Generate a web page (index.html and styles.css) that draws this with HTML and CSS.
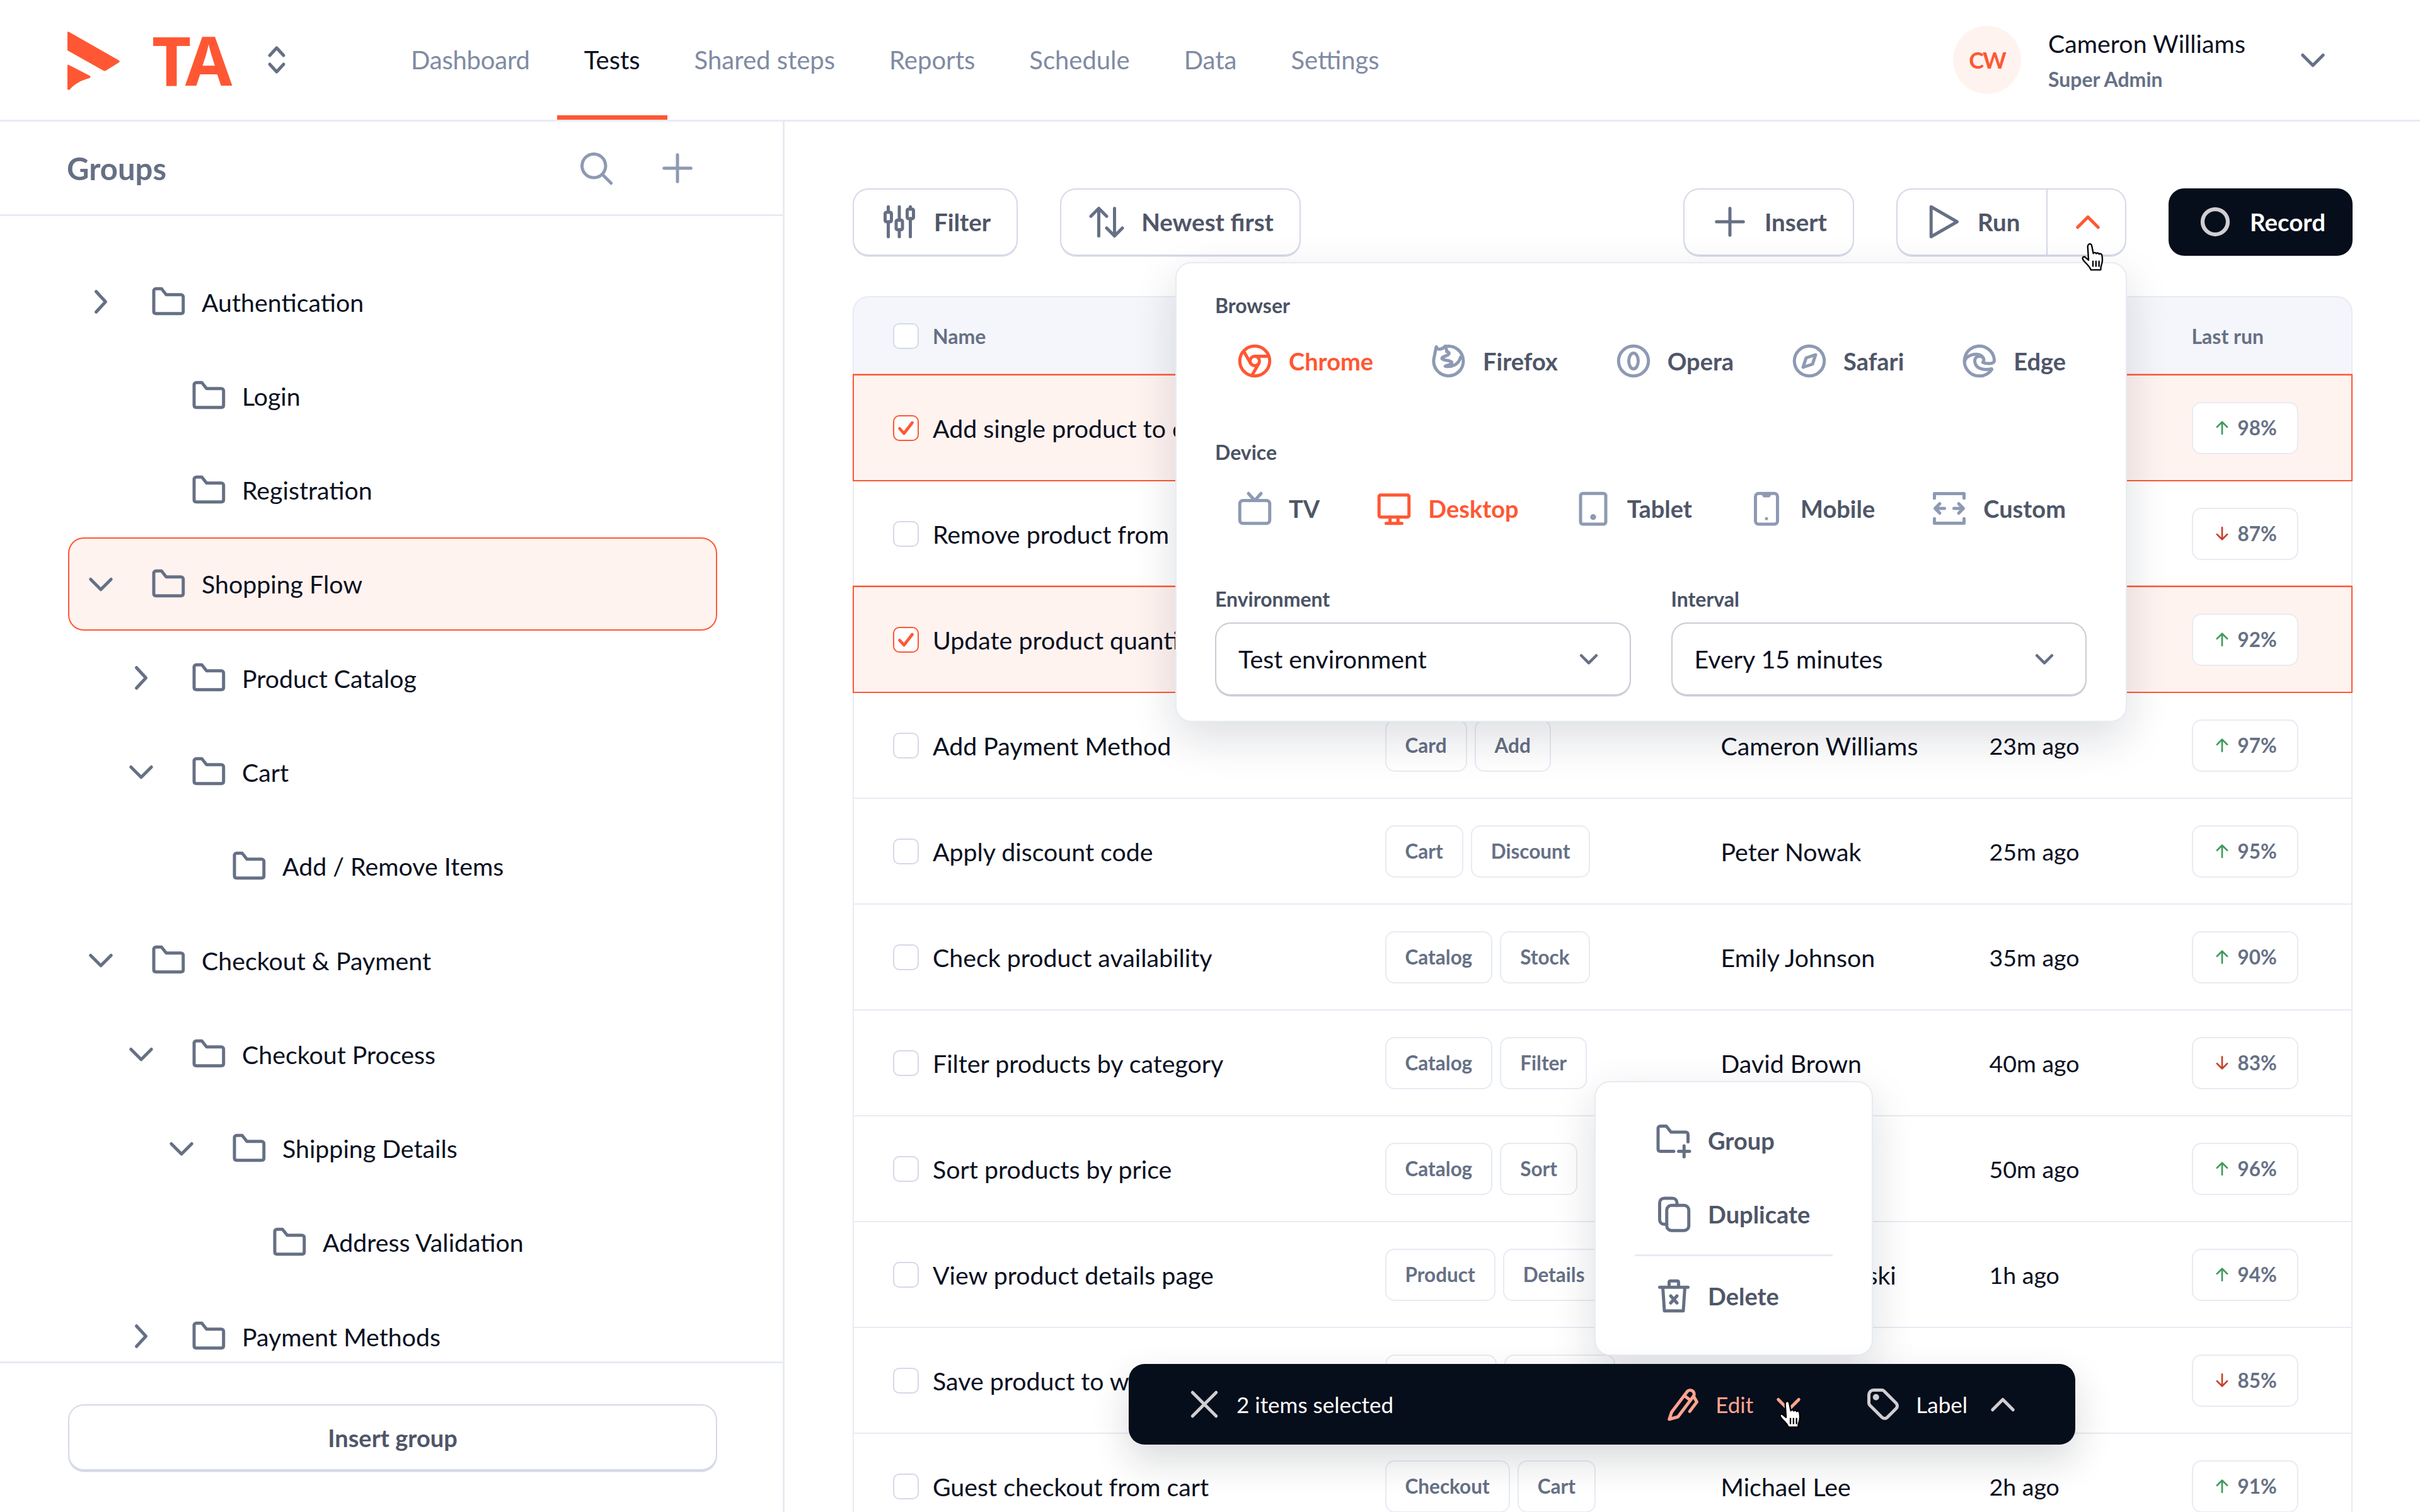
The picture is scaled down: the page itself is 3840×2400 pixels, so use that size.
FILE: index.html
```html
<!DOCTYPE html>
<html lang="en">
<head>
  <meta charset="UTF-8">
  <title>Tests</title>
  <meta name="viewport" content="width=device-width, initial-scale=1.0">
  <link rel="stylesheet" href="styles.css">
</head>
<body>
  <!-- icon sprite -->
  <svg class="sprite" xmlns="http://www.w3.org/2000/svg">
    <symbol id="i-folder" viewBox="0 0 24 24"><path d="M2.4 5.2c0-.9.6-1.5 1.5-1.5h3.4l3 3.8h9.3c.9 0 1.5.6 1.5 1.5v9c0 1-.6 1.5-1.5 1.5H3.9c-.9 0-1.5-.5-1.5-1.5z"/></symbol>
    <symbol id="i-right" viewBox="0 0 24 24"><path d="M9 5.5l6 6.5-6 6.5"/></symbol>
    <symbol id="i-down" viewBox="0 0 24 24"><path d="M5.5 9l6.5 6.5L18.500 9"/></symbol>
    <symbol id="i-up" viewBox="0 0 24 24"><path d="M5.5 15.5L12 9l6.5 6.5"/></symbol>
    <symbol id="i-search" viewBox="0 0 24 24"><circle cx="10.5" cy="10.5" r="7.5"/><path d="M16 16l5.5 5.5"/></symbol>
    <symbol id="i-plus" viewBox="0 0 24 24"><path d="M12 3.5v17M3.5 12h17"/></symbol>
    <symbol id="i-filter" viewBox="0 0 24 24"><path d="M5 2.5v3M5 12v9.5M12 2.5v8M12 17v4.5M19 2.5v1M19 10v11.5"/><rect x="3" y="6" width="4" height="6" rx=".8"/><rect x="10" y="11" width="4" height="6" rx=".8"/><rect x="17" y="4" width="4" height="6" rx=".8"/></symbol>
    <symbol id="i-sort" viewBox="0 0 24 24"><path d="M7 21V3.5M2 8.5l5-5 5 5M17 3.5V21M12 16l5 5 5-5"/></symbol>
    <symbol id="i-play" viewBox="0 0 24 24"><path d="M4.5 2.5L21 12 4.5 21.5z"/></symbol>
    <symbol id="i-circle" viewBox="0 0 24 24"><circle cx="12" cy="12" r="8"/></symbol>
    <symbol id="i-chrome" viewBox="0 0 24 24"><circle cx="12" cy="12" r="9.5"/><circle cx="12" cy="12" r="3"/><path d="M12 9h8.9M14.6 13.5l-4.4 7.7M9.4 13.5L5 5.8"/></symbol>
    <symbol id="i-firefox" viewBox="0 0 24 24"><path d="M10.5 2.7A9.4 9.4 0 1 1 2.5 10.5L4 3c.6 1.500 1.500 1.600 2.800 1.400 1-.2 2-.8 2.900-1.800.3 1.400 1.300 2.400.9 3.400 2.400.5 1.900 2-.6 2.800-3.500 1.200-3 2.200 0 2.700 4 .5 5 1.500 2.500 2.800-1 .5-2.500.7-2.800 1 3.300.7 8.300-.3 9.800-5.800"/></symbol>
    <symbol id="i-opera" viewBox="0 0 24 24"><circle cx="12" cy="12" r="9.5"/><ellipse cx="12" cy="12" rx="3" ry="5"/></symbol>
    <symbol id="i-safari" viewBox="0 0 24 24"><circle cx="12" cy="12" r="9.5"/><path d="M8 16l2-6 6-2-2 6z"/></symbol>
    <symbol id="i-edge" viewBox="0 0 24 24"><path d="M21.4 11.4a9.5 9.5 0 1 0-1.700 6.100"/><path d="M21.4 11.4c.2 3-5.400 2.400-7.300 1.500 1.400-1.600.4-4-2.300-3.900-1.700.1-2.900 1.200-2.800 3.200.3 4 4.500 6.200 10.700 4.800"/><path d="M2.6 12.600C2.300 8.500 11.700 5.400 14.300 9.900"/></symbol>
    <symbol id="i-tv" viewBox="0 0 24 24"><rect x="2.5" y="7" width="19" height="14.5" rx="2"/><path d="M16 2.5L12 7 8 2.5"/></symbol>
    <symbol id="i-desktop" viewBox="0 0 24 24"><rect x="2.5" y="3.5" width="19" height="14" rx="1"/><path d="M7 21.500h10M9.500 17.500v4M14.500 17.500v4"/></symbol>
    <symbol id="i-tablet" viewBox="0 0 24 24"><rect x="4" y="2.5" width="16" height="19.5" rx="1.5"/><circle cx="12" cy="17.5" r=".9"/></symbol>
    <symbol id="i-mobile" viewBox="0 0 24 24"><rect x="5" y="2.5" width="14" height="19.5" rx="2"/><path d="M10 3l.5 1h3l.5-1M12 18.500h.01"/></symbol>
    <symbol id="i-custom" viewBox="0 0 24 24"><path d="M2.600 5.500V2.600h18.800v2.900M2.600 18.500v2.900h18.800v-2.900M9 12H3.500M6 9l-3 3 3 3M15 12h5.500M18 9l3 3-3 3"/></symbol>
    <symbol id="i-group" viewBox="0 0 24 24"><path d="M12 19H3.500c-.9 0-1.500-.5-1.500-1.500V4.500C2 3.600 2.600 3 3.500 3h3.700l3 3.800h9.300c.9 0 1.500.6 1.500 1.500v4.700M18.500 15.500v7M15 19h7"/></symbol>
    <symbol id="i-copy" viewBox="0 0 24 24"><rect x="7.5" y="6.5" width="14" height="16" rx="3"/><path d="M7.500 18.500H6c-1.800 0-3-1.200-3-3V5c0-1.800 1.200-3 3-3h5c1.800 0 3 1.200 3 3v1.500"/></symbol>
    <symbol id="i-trash" viewBox="0 0 24 24"><path d="M3 6.500h18M5 6.500l1 15h12l1-15M9 6.500V3.500c0-.6.400-1 1-1h4c.6 0 1 .4 1 1v3M10 12l4 4.500M14 12l-4 4.500"/></symbol>
    <symbol id="i-edit" viewBox="0 0 24 24"><path d="M3.500 21.500L5 17 15 3.800a2.500 2.500 0 0 1 4 2.900L9 20z"/><path d="M13 6.500l4 3M19 7l2 3.500-4.500 6"/></symbol>
    <symbol id="i-tag" viewBox="0 0 24 24"><path d="M3 6v5.200a2 2 0 0 0 .6 1.400l7.700 7.700a2.400 2.400 0 0 0 3.400 0l5.600-5.600a2.400 2.400 0 0 0 0-3.400l-7.700-7.700a2 2 0 0 0-1.400-.6H6a3 3 0 0 0-3 3z"/><circle cx="7.5" cy="7.5" r="1"/></symbol>
    <symbol id="i-close" viewBox="0 0 24 24"><path d="M4.500 4.500l15 15M19.500 4.500l-15 15"/></symbol>
    <symbol id="i-arrow-up" viewBox="0 0 24 24"><path d="M12 21V3.500M4.500 11L12 3.500l7.500 7.500"/></symbol>
    <symbol id="i-arrow-down" viewBox="0 0 24 24"><path d="M12 3v17.500M4.500 13l7.500 7.500 7.500-7.500"/></symbol>
    <symbol id="i-hand" viewBox="0 0 24 28"><path d="M8 2.500c1-.8 2.200-.2 2.500 1l1.300 6.500c.3-1 2-1 2.400.2.500-.9 2-.8 2.400.4.600-.7 2-.4 2.300.8.500 2.500.6 5.400-.4 8-.4 1-.6 2.600-.6 4.100H9.800c-.6-1.800-1.900-3.200-3.400-4.800-1.200-1.300-3-3-3.400-4.400-.3-1.200 1-2 2-1.300l2.900 2.500L7.200 4.500c-.1-.8.200-1.500.8-2z"/><path d="M11.500 16v5M14 16v5M16.500 16v5"/></symbol>
  </svg>

  <header class="topbar">
    <div class="brand">
      <svg class="brand-mark" viewBox="0 0 85 95" aria-hidden="true">
        <path d="M3 3l79 45a2 2 0 0 1 0 3L61 64a4 4 0 0 1-4 0L0 32V4c0-2 1-2 3-1z"/>
        <path d="M2 55l33 17c2 1 2 3 0 4-14 4-24 9-31 18-2 1-4 1-4-1V57c0-2 1-3 2-2z"/>
      </svg>
      <span class="brand-name">TA</span>
      <svg class="brand-switch" viewBox="0 0 30 46"><path d="M4 16L15 4l11 12M4 30l11 12 11-12"/></svg>
    </div>
    <nav class="nav">
      <a>Dashboard</a>
      <a class="active">Tests</a>
      <a>Shared steps</a>
      <a>Reports</a>
      <a>Schedule</a>
      <a>Data</a>
      <a>Settings</a>
    </nav>
    <div class="user">
      <span class="avatar">CW</span>
      <div class="user-info">
        <div class="user-name">Cameron Williams</div>
        <div class="user-role">Super Admin</div>
      </div>
      <svg class="icon"><use href="#i-down"/></svg>
    </div>
  </header>

  <div class="content">
    <aside class="sidebar">
      <div class="side-head">
        <h2>Groups</h2>
        <svg class="icon muted"><use href="#i-search"/></svg>
        <svg class="icon muted"><use href="#i-plus"/></svg>
      </div>
      <div class="tree">
        <div class="node"><svg class="icon"><use href="#i-right"/></svg><svg class="icon"><use href="#i-folder"/></svg><span>Authentication</span></div>
        <div class="node lvl-1"><span class="icon"></span><svg class="icon"><use href="#i-folder"/></svg><span>Login</span></div>
        <div class="node lvl-1"><span class="icon"></span><svg class="icon"><use href="#i-folder"/></svg><span>Registration</span></div>
        <div class="node current"><svg class="icon"><use href="#i-down"/></svg><svg class="icon"><use href="#i-folder"/></svg><span>Shopping Flow</span></div>
        <div class="node lvl-1"><svg class="icon"><use href="#i-right"/></svg><svg class="icon"><use href="#i-folder"/></svg><span>Product Catalog</span></div>
        <div class="node lvl-1"><svg class="icon"><use href="#i-down"/></svg><svg class="icon"><use href="#i-folder"/></svg><span>Cart</span></div>
        <div class="node lvl-2"><span class="icon"></span><svg class="icon"><use href="#i-folder"/></svg><span>Add / Remove Items</span></div>
        <div class="node"><svg class="icon"><use href="#i-down"/></svg><svg class="icon"><use href="#i-folder"/></svg><span>Checkout &amp; Payment</span></div>
        <div class="node lvl-1"><svg class="icon"><use href="#i-down"/></svg><svg class="icon"><use href="#i-folder"/></svg><span>Checkout Process</span></div>
        <div class="node lvl-2"><svg class="icon"><use href="#i-down"/></svg><svg class="icon"><use href="#i-folder"/></svg><span>Shipping Details</span></div>
        <div class="node lvl-3"><span class="icon"></span><svg class="icon"><use href="#i-folder"/></svg><span>Address Validation</span></div>
        <div class="node lvl-1"><svg class="icon"><use href="#i-right"/></svg><svg class="icon"><use href="#i-folder"/></svg><span>Payment Methods</span></div>
      </div>
      <div class="side-foot">
        <button class="insert-group">Insert group</button>
      </div>
    </aside>

    <main class="main">
      <div class="toolbar">
        <button class="btn"><svg class="icon"><use href="#i-filter"/></svg>Filter</button>
        <button class="btn"><svg class="icon"><use href="#i-sort"/></svg>Newest first</button>
        <button class="btn push"><svg class="icon"><use href="#i-plus"/></svg>Insert</button>
        <div class="btn split">
          <span class="split-main"><svg class="icon"><use href="#i-play"/></svg>Run</span>
          <span class="split-toggle"><svg class="icon accent"><use href="#i-up"/></svg></span>
        </div>
        <button class="btn record"><svg class="icon"><use href="#i-circle"/></svg>Record</button>
      </div>

      <div class="table">
        <div class="row head">
          <div class="name"><span class="check"></span>Name</div>
          <div></div>
          <div></div>
          <div></div>
          <div>Last run</div>
        </div>
        <!-- cells under the dropdown are left empty -->
        <div class="row selected">
          <div class="name"><span class="check on"><svg viewBox="0 0 24 24"><path d="M5.5 12.5l4.5 5 8.5-11"/></svg></span>Add single product to cart</div>
          <div></div>
          <div></div>
          <div></div>
          <div><span class="rate"><svg class="up"><use href="#i-arrow-up"/></svg>98%</span></div>
        </div>
        <div class="row">
          <div class="name"><span class="check"></span>Remove product from cart</div>
          <div></div>
          <div></div>
          <div></div>
          <div><span class="rate"><svg class="down"><use href="#i-arrow-down"/></svg>87%</span></div>
        </div>
        <div class="row selected">
          <div class="name"><span class="check on"><svg viewBox="0 0 24 24"><path d="M5.5 12.5l4.5 5 8.5-11"/></svg></span>Update product quantity</div>
          <div></div>
          <div></div>
          <div></div>
          <div><span class="rate"><svg class="up"><use href="#i-arrow-up"/></svg>92%</span></div>
        </div>
        <div class="row">
          <div class="name"><span class="check"></span>Add Payment Method</div>
          <div class="tags"><span class="tag">Card</span><span class="tag">Add</span></div>
          <div>Cameron Williams</div>
          <div class="time">23m ago</div>
          <div><span class="rate"><svg class="up"><use href="#i-arrow-up"/></svg>97%</span></div>
        </div>
        <div class="row">
          <div class="name"><span class="check"></span>Apply discount code</div>
          <div class="tags"><span class="tag">Cart</span><span class="tag">Discount</span></div>
          <div>Peter Nowak</div>
          <div class="time">25m ago</div>
          <div><span class="rate"><svg class="up"><use href="#i-arrow-up"/></svg>95%</span></div>
        </div>
        <div class="row">
          <div class="name"><span class="check"></span>Check product availability</div>
          <div class="tags"><span class="tag">Catalog</span><span class="tag">Stock</span></div>
          <div>Emily Johnson</div>
          <div class="time">35m ago</div>
          <div><span class="rate"><svg class="up"><use href="#i-arrow-up"/></svg>90%</span></div>
        </div>
        <div class="row">
          <div class="name"><span class="check"></span>Filter products by category</div>
          <div class="tags"><span class="tag">Catalog</span><span class="tag">Filter</span></div>
          <div>David Brown</div>
          <div class="time">40m ago</div>
          <div><span class="rate"><svg class="down"><use href="#i-arrow-down"/></svg>83%</span></div>
        </div>
        <div class="row">
          <div class="name"><span class="check"></span>Sort products by price</div>
          <div class="tags"><span class="tag">Catalog</span><span class="tag">Sort</span></div>
          <div></div>
          <div class="time">50m ago</div>
          <div><span class="rate"><svg class="up"><use href="#i-arrow-up"/></svg>96%</span></div>
        </div>
        <div class="row">
          <div class="name"><span class="check"></span>View product details page</div>
          <div class="tags"><span class="tag">Product</span><span class="tag">Details</span></div>
          <div>Martin Kowalski</div>
          <div class="time">1h ago</div>
          <div><span class="rate"><svg class="up"><use href="#i-arrow-up"/></svg>94%</span></div>
        </div>
        <div class="row">
          <div class="name"><span class="check"></span>Save product to wishlist</div>
          <div class="tags"><span class="tag">Wishlist</span><span class="tag">Product</span></div>
          <div></div>
          <div></div>
          <div><span class="rate"><svg class="down"><use href="#i-arrow-down"/></svg>85%</span></div>
        </div>
        <div class="row">
          <div class="name"><span class="check"></span>Guest checkout from cart</div>
          <div class="tags"><span class="tag">Checkout</span><span class="tag">Cart</span></div>
          <div>Michael Lee</div>
          <div class="time">2h ago</div>
          <div><span class="rate"><svg class="up"><use href="#i-arrow-up"/></svg>91%</span></div>
        </div>
      </div>

      <!-- run options dropdown -->
      <div class="popup run-popup">
        <div class="pop-label">Browser</div>
        <div class="options">
          <span class="option active"><svg class="icon"><use href="#i-chrome"/></svg>Chrome</span>
          <span class="option"><svg class="icon"><use href="#i-firefox"/></svg>Firefox</span>
          <span class="option"><svg class="icon"><use href="#i-opera"/></svg>Opera</span>
          <span class="option"><svg class="icon"><use href="#i-safari"/></svg>Safari</span>
          <span class="option"><svg class="icon"><use href="#i-edge"/></svg>Edge</span>
        </div>
        <div class="pop-label device">Device</div>
        <div class="options device-options">
          <span class="option"><svg class="icon"><use href="#i-tv"/></svg>TV</span>
          <span class="option active"><svg class="icon"><use href="#i-desktop"/></svg>Desktop</span>
          <span class="option"><svg class="icon"><use href="#i-tablet"/></svg>Tablet</span>
          <span class="option"><svg class="icon"><use href="#i-mobile"/></svg>Mobile</span>
          <span class="option"><svg class="icon"><use href="#i-custom"/></svg>Custom</span>
        </div>
        <div class="fields">
          <div class="field">
            <div class="pop-label">Environment</div>
            <div class="select">Test environment<svg class="icon"><use href="#i-down"/></svg></div>
          </div>
          <div class="field">
            <div class="pop-label">Interval</div>
            <div class="select">Every 15 minutes<svg class="icon"><use href="#i-down"/></svg></div>
          </div>
        </div>
      </div>
      <svg class="cursor cursor-run"><use href="#i-hand"/></svg>

      <!-- actions menu -->
      <div class="popup action-menu">
        <div class="menu-item"><svg class="icon"><use href="#i-group"/></svg>Group</div>
        <div class="menu-item"><svg class="icon"><use href="#i-copy"/></svg>Duplicate</div>
        <div class="menu-line"></div>
        <div class="menu-item"><svg class="icon"><use href="#i-trash"/></svg>Delete</div>
      </div>

      <!-- selection bar -->
      <div class="select-bar">
        <svg class="icon"><use href="#i-close"/></svg>
        <span class="bar-count">2 items selected</span>
        <span class="bar-action edit"><svg class="icon"><use href="#i-edit"/></svg>Edit<svg class="icon bar-chevron"><use href="#i-down"/></svg></span>
        <span class="bar-action"><svg class="icon"><use href="#i-tag"/></svg>Label<svg class="icon bar-chevron"><use href="#i-up"/></svg></span>
      </div>
      <svg class="cursor cursor-edit"><use href="#i-hand"/></svg>
    </main>
  </div>
</body>
</html>
```

FILE: styles.css
```css
* { box-sizing: border-box; }
html, body { height: 100%; }
body {
  margin: 0;
  overflow: hidden;
  background: #fff;
  color: #0a101f;
  font-family: Lato, "Noto Sans", Arial, sans-serif;
  font-size: 39.3px;
}
.sprite { display: none; }
button { font: inherit; background: none; cursor: pointer; }

.icon {
  flex: none;
  display: block;
  width: 60px;
  height: 60px;
  fill: none;
  stroke: #667085;
  stroke-width: 2;
  stroke-linecap: round;
  stroke-linejoin: round;
}
.icon.muted { stroke: #8e9ab3; }
.icon.accent { stroke: #ff5733; }

/* top bar */
.topbar {
  display: flex;
  align-items: center;
  height: 193px;
  padding: 0 140px 0 107px;
  border-bottom: 3px solid #e8ebf3;
}
.brand { display: flex; align-items: center; width: 503px; }
.brand-mark { width: 85px; height: 95px; fill: #ff5733; }
.brand-name {
  margin-left: 49px;
  color: #ff5733;
  font-family: "Noto Sans", sans-serif;
  font-size: 108px;
  font-weight: 700;
  line-height: 1;
  letter-spacing: -2px;
}
.brand-switch {
  width: 30px;
  height: 46px;
  margin-left: 57px;
  fill: none;
  stroke: #667085;
  stroke-width: 5;
  stroke-linecap: round;
  stroke-linejoin: round;
}
.nav { display: flex; height: 100%; font-size: 40px; }
.nav a {
  display: flex;
  align-items: center;
  padding: 0 43px;
  color: #808ba3;
}
.nav a:first-child { padding-left: 42px; letter-spacing: -.2px; }
.nav a.active { color: #0a101f; box-shadow: inset 0 -7px 0 #ff5733; }
.user { display: flex; align-items: center; margin-left: auto; }
.avatar {
  display: flex;
  align-items: center;
  justify-content: center;
  width: 108px;
  height: 108px;
  margin-right: 43px;
  border-radius: 50%;
  background: #fff3f0;
  color: #ff5733;
  font-weight: 700;
  font-size: 36px;
  letter-spacing: -2px;
}
.user-info { width: 390px; }
.user-name { line-height: 50px; }
.user-role { margin-top: 12px; color: #667085; font-size: 32px; font-weight: 700; line-height: 40px; }

.content { display: flex; height: calc(100% - 193px); }

/* sidebar */
.sidebar {
  display: flex;
  flex-direction: column;
  flex: none;
  width: 1245px;
  border-right: 3px solid #e8ebf3;
}
.side-head {
  display: flex;
  align-items: center;
  gap: 69px;
  flex: none;
  height: 150px;
  padding: 0 137px 0 106px;
  border-bottom: 3px solid #e8ebf3;
}
.side-head h2 {
  flex: 1;
  margin: 0;
  color: #667085;
  font-size: 49px;
  font-weight: 700;
}
.tree { flex: 1; min-height: 0; overflow: hidden; padding-top: 62px; }
.node {
  display: flex;
  align-items: center;
  width: 1030px;
  height: 148px;
  margin: 0 0 1.3px 108px;
  padding-left: 20px;
  border: 2.5px solid transparent;
  border-radius: 25px;
}
.node > svg + svg { margin-left: 48px; }
.node > span.icon + svg { margin-left: 48px; }
.node > span:last-child { margin-left: 22px; }
.node.lvl-1 { padding-left: 84px; }
.node.lvl-2 { padding-left: 148px; }
.node.lvl-3 { padding-left: 212px; }
.node.current { background: #fff3f0; border-color: #ff5733; }
.side-foot { flex: none; padding: 65px 104px 66px 108px; border-top: 3px solid #e8ebf3; }
.insert-group {
  width: 100%;
  height: 105px;
  border: 2.5px solid #d5d9e8;
  border-radius: 25px;
  box-shadow: 0 2.5px 0 #d5d9e8;
  color: #4f5668;
  font-size: 38px;
  font-weight: 700;
}

/* main column */
.main { position: relative; flex: 1; min-width: 0; padding: 106px 107px 0 108px; }
.toolbar { display: flex; gap: 67px; height: 107px; margin-bottom: 64px; }
.btn {
  display: flex;
  align-items: center;
  gap: 25px;
  height: 107px;
  padding: 0 41px 2px 42px;
  border: 2.5px solid #d5d9e8;
  border-radius: 25px;
  box-shadow: 0 1.5px 0 #d5d9e8;
  color: #4f5668;
  font-size: 38.5px;
  font-weight: 700;
}
.btn.push { margin-left: auto; }
.btn.split { gap: 0; padding: 0; }
.split-main { display: flex; align-items: center; gap: 25px; width: 238px; height: 100%; padding: 0 0 2px 42px; border-right: 2.5px solid #d5d9e8; }
.split-toggle { display: flex; align-items: center; justify-content: center; width: 123px; padding: 0 0 2px 5px; }
.btn.record { background: #060d1b; border-color: #060d1b; box-shadow: none; color: #fff; }
.btn.record .icon { stroke: #cfcfd2; stroke-width: 2.5; }

/* table */
.row {
  display: grid;
  grid-template-columns: 842.5px 533px 426px 321px 1fr;
  align-items: center;
  height: 168px;
  border: 2.5px solid #e8ebf3;
  border-top: 0;
}
.row.head {
  height: 126px;
  border-top: 2.5px solid #e8ebf3;
  border-radius: 25px 25px 0 0;
  background: #f5f6fb;
  color: #667085;
  font-size: 32px;
  font-weight: 700;
}
.row.selected { border-color: #ff5733; background: #fff3f0; box-shadow: 0 -2.5px 0 #ff5733; }
.name { display: flex; align-items: center; gap: 22px; padding-left: 62px; white-space: nowrap; }
.time { font-size: 37.5px; }
.check {
  flex: none;
  display: block;
  width: 41px;
  height: 41px;
  border: 2.5px solid #d5d9e8;
  border-radius: 10px;
  background: #fff;
}
.check.on { border-color: #ff5733; }
.check svg { display: block; fill: none; stroke: #ff5733; stroke-width: 3; stroke-linecap: round; stroke-linejoin: round; }
.tags { display: flex; gap: 12px; }
.tag, .rate {
  display: inline-flex;
  align-items: center;
  height: 83px;
  padding: 0 30px;
  border: 2.5px solid #e8ebf3;
  border-radius: 15px;
  background: #fff;
  color: #667085;
  font-size: 31.5px;
  font-weight: 700;
}
.rate { gap: 12px; padding: 0 32px 0 33px; }
.rate svg {
  width: 26px;
  height: 26px;
  fill: none;
  stroke-width: 2.5;
  stroke-linecap: round;
  stroke-linejoin: round;
}
.up { stroke: #3f9a5c; }
.down { stroke: #c8402a; }

/* floating panels */
.popup {
  position: absolute;
  border: 2.5px solid #e8ebf3;
  border-radius: 25px;
  background: #fff;
  box-shadow: 0 25px 70px rgba(16, 24, 40, 0.14);
}
.run-popup { top: 223px; left: 620px; width: 1510px; height: 730px; padding: 47px 62px 0 61px; }
.pop-label { color: #4a5264; font-size: 32px; font-weight: 700; line-height: 40px; }
.pop-label.device { margin-top: 94.5px; }
.options { display: flex; justify-content: space-between; margin-top: 38px; }
.options.device-options { margin-top: 39px; }
.option {
  display: flex;
  align-items: center;
  gap: 24px;
  padding: 0 33px;
  color: #4f5668;
  font-size: 38px;
  font-weight: 700;
}
.option .icon { stroke: #8e9ab3; }
.option.active { color: #ff5733; }
.option.active .icon { stroke: #ff5733; }
.fields { display: flex; gap: 64px; margin-top: 94px; }
.field { flex: 1; }
.select {
  display: flex;
  align-items: center;
  justify-content: space-between;
  height: 116px;
  margin-top: 17px;
  padding: 0 43px 0 35px;
  border: 2.5px solid #c9ccd4;
  border-radius: 25px;
  box-shadow: 0 1.5px 0 #c9ccd4;
}
.select .icon { width: 44px; height: 44px; stroke-width: 2.5; }
.action-menu { top: 1523px; left: 1285px; width: 442px; height: 436px; padding: 33px 62px; }
.menu-item {
  display: flex;
  align-items: center;
  gap: 24px;
  height: 117px;
  padding-left: 32px;
  color: #4f5668;
  font-size: 38px;
  font-weight: 700;
}
.menu-line { height: 3px; margin: 6px 0 4px; background: #e8ebf3; }
.select-bar {
  position: absolute;
  top: 1972px;
  left: 546px;
  display: flex;
  align-items: center;
  width: 1502px;
  height: 128px;
  padding: 0 85px 0 90px;
  border-radius: 25px;
  background: #060d1b;
  box-shadow: 0 25px 60px rgba(16, 24, 40, 0.16);
  color: #fff;
  font-size: 35px;
}
.select-bar .icon { stroke: #cfcfd2; }
.bar-count { margin-left: 21px; margin-right: auto; }
.bar-action { display: flex; align-items: center; gap: 22px; margin-left: 90px; }
.bar-chevron { margin-left: 4px; }
.edit { color: #ffa48f; }
.select-bar .edit .icon { stroke: #ffa48f; }
.cursor {
  position: absolute;
  fill: #fff;
  stroke: #000;
  stroke-width: 1.2;
  stroke-linejoin: round;
}
.cursor-run { top: 190px; left: 2053px; width: 48px; height: 54px; }
.cursor-edit { top: 2027px; left: 1573px; width: 48px; height: 54px; }
```
